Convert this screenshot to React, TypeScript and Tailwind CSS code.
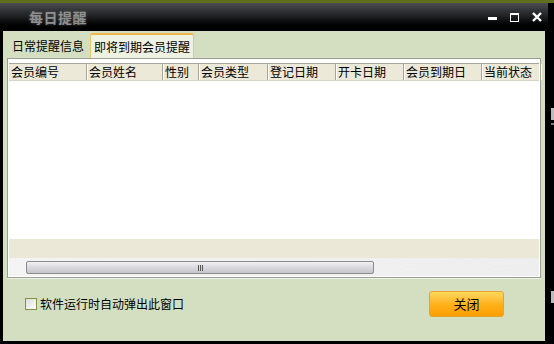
import React from 'react'

const columns = [
  { label: '会员编号', w: 'w-[78px]' },
  { label: '会员姓名', w: 'w-[76px]' },
  { label: '性别', w: 'w-[36px]' },
  { label: '会员类型', w: 'w-[69px]' },
  { label: '登记日期', w: 'w-[68px]' },
  { label: '开卡日期', w: 'w-[68px]' },
  { label: '会员到期日', w: 'w-[78px]' },
  { label: '当前状态', w: 'w-[59px]' },
]

const font = { fontFamily: '"Noto Sans CJK SC", "Noto Sans", sans-serif' }

export default function App() {
  return (
    <div className="w-[554px] h-[344px] flex flex-col bg-black overflow-hidden" style={font}>
      {/* desktop strip */}
      <div className="h-[3px] bg-[#5f6e1f]" />

      <div className="flex flex-1">
        <div className="w-[548px] flex flex-col">
          {/* Title bar */}
          <div className="h-[28px] flex items-center pl-[29px] pr-[6px] bg-gradient-to-b from-[#4b4f53] via-[#1c1e20] to-black">
            <span className="text-[14px] font-bold text-[#8f8f8f] tracking-[0.5px] [text-shadow:0_0_3px_#555]">
              每日提醒
            </span>
            <div className="ml-auto flex items-center gap-[13px]">
              <div className="w-[9px] h-[3px] bg-white mt-[3px]" />
              <div className="w-[9px] h-[9px] border border-white border-t-2" />
              <svg width="10" height="10" viewBox="0 0 10 10">
                <path d="M1 1 L9 9 M9 1 L1 9" stroke="white" strokeWidth="2.4" />
              </svg>
            </div>
          </div>

          {/* Body */}
          <div className="flex-1 mx-[3px] mb-[3px] bg-[#d3dfc0] flex flex-col">
            {/* Tabs */}
            <div className="h-[27px] flex items-end pl-[6px] gap-[3px]">
              <div className="h-[24px] px-[3px] flex items-center text-[12px] text-black">日常提醒信息</div>
              <div className="h-[25px] px-[3px] flex items-center text-[12px] text-black bg-[#eef2e3] border border-b-0 border-[#e9c76a] border-t-2 border-t-[#f0b64a] rounded-t-[3px]">
                即将到期会员提醒
              </div>
            </div>

            {/* Panel */}
            <div className="mx-[4px] h-[220px] border border-[#9e9e96] bg-white p-[1px] flex flex-col">
              <div className="h-[3px] bg-white" />
              <div className="flex h-[18px] bg-[#ece9d8] border-t border-[#a8a69a] border-b border-b-[#d6d3c4]">
                {columns.map((c) => (
                  <div
                    key={c.label}
                    className={`${c.w} shrink-0 flex items-center pl-[2px] text-[12px] text-black border-r border-[#a7a597] shadow-[1px_0_0_#fff] whitespace-nowrap`}
                  >
                    {c.label}
                  </div>
                ))}
              </div>
              <div className="flex-1 bg-white" />
              <div className="h-[19px] bg-[#ebe8d8]" />
              {/* Scrollbar */}
              <div className="h-[18px] bg-gradient-to-r from-[#f4f4f4] to-[#eeeeee] flex items-center pl-[17px]">
                <div className="w-[348px] h-[13px] rounded-[2px] border border-[#8b8b8b] bg-gradient-to-b from-[#f2f2f4] via-[#d9d9de] to-[#c6c6cc] flex items-center justify-center">
                  <span className="flex gap-[1px] mt-[2px]">
                    <span className="w-[1px] h-[6px] bg-[#555]" />
                    <span className="w-[1px] h-[6px] bg-[#555]" />
                    <span className="w-[1px] h-[6px] bg-[#555]" />
                  </span>
                </div>
              </div>
            </div>
            <div className="mx-[4px] h-[1px] bg-[#eef2e6]" />

            {/* Footer */}
            <div className="flex items-center pl-[22px] pr-[41px] mt-[12px]">
              <div className="w-[12px] h-[12px] border border-[#7f9442] bg-gradient-to-br from-[#dcdcd8] to-white" />
              <span className="ml-[3px] text-[12px] text-black">软件运行时自动弹出此窗口</span>
              <button className="ml-auto w-[75px] h-[26px] rounded-[3px] border border-[#e3a532] bg-gradient-to-b from-[#ffd75a] via-[#ffb21a] to-[#ff9d00] text-[13px] text-black">
                关闭
              </button>
            </div>
          </div>
        </div>

        {/* Window behind, right edge */}
        <div className="flex-1 flex flex-col">
          <div className="h-[105px]" />
          <div className="h-[12px] w-[3px] ml-[3px] bg-[#bbb]" />
          <div className="h-[3px]" />
          <div className="h-[2px] w-[3px] ml-[3px] bg-[#777]" />
          <div className="h-[166px]" />
          <div className="h-[12px] w-[3px] ml-[3px] bg-[#bbb]" />
        </div>
      </div>
    </div>
  )
}
